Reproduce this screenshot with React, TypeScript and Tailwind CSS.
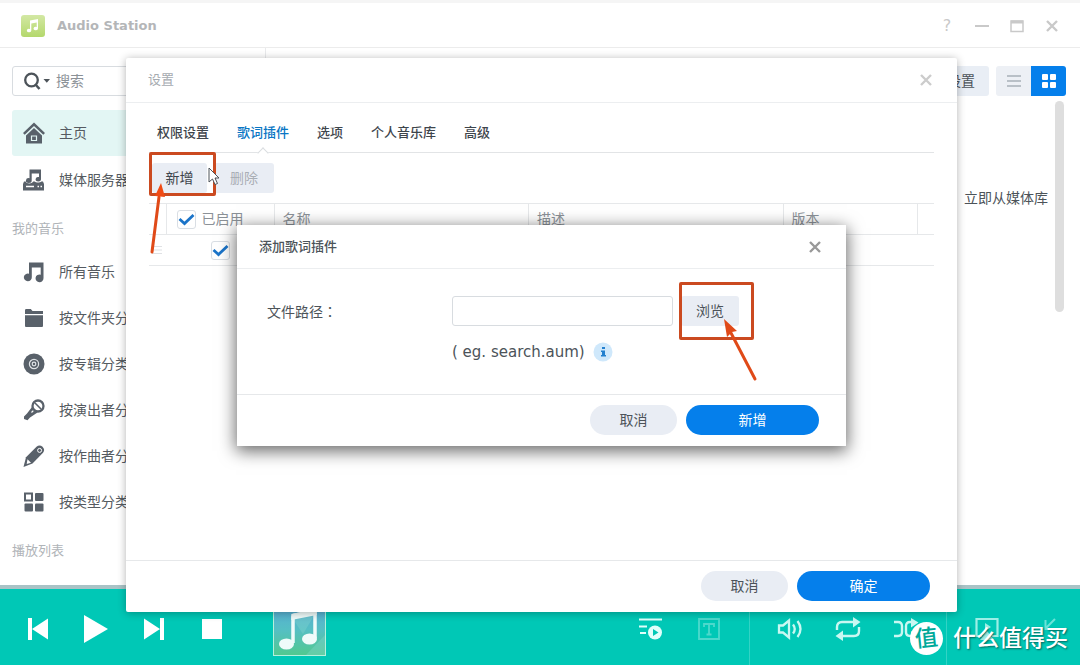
import React from "react";

const sans = "font-['DejaVu_Sans','Noto_Sans_CJK_SC',sans-serif]";

const browseItems = [
  { label: "所有音乐", icon: <NoteIcon /> },
  { label: "按文件夹分类", icon: <FolderIcon /> },
  { label: "按专辑分类", icon: <DiscIcon /> },
  { label: "按演出者分类", icon: <MicIcon /> },
  { label: "按作曲者分类", icon: <PenIcon /> },
  { label: "按类型分类", icon: <GenreIcon /> },
];

const tabs = ["权限设置", "歌词插件", "选项", "个人音乐库", "高级"];

function HomeIcon() {
  return (
    <svg viewBox="0 0 22 22" className="size-[22px]" fill="#59616a">
      <path d="M11 0.5 0 11l1.7 1.8L11 4l9.300 8.800L22 11z" />
      <path d="M3 13.500 11 6l8 7.500V21.500H3z" />
      <path d="M8.500 14h5v4.500h-5z" fill="none" stroke="#e3f6f4" strokeWidth="1.2" />
    </svg>
  );
}

function ServerIcon() {
  return (
    <svg viewBox="0 0 22 22" className="size-[22px]" fill="#59616a">
      <path d="M6.500 0.500H18v9.600a2.700 2.200 0 1 1-2-2V4.500H8.700v6.900a2.900 2.400 0 1 1-2.200-2.200z" />
      <path d="M1 12.500h1.600c.6 2.400 6.400 2.800 7.600 0h1.600c1 1.300 5 1.500 6.500 0H20l1 2.500v6.500H0V15z" />
      <path d="M3 17.500h8M14.500 17.500H16M17.500 17.500H19" stroke="#fff" strokeWidth="1.6" />
    </svg>
  );
}

function NoteIcon() {
  return (
    <svg viewBox="0 0 22 22" className="size-[22px]" fill="#59616a">
      <path d="M6 1.500H20.500V17a4 3.800 0 1 1-2.800-3.300V6.500H8.800v9.500a4 3.800 0 1 1-2.800-3.200z" />
    </svg>
  );
}

function FolderIcon() {
  return (
    <svg viewBox="0 0 22 22" className="size-[22px]" fill="#59616a">
      <path d="M2 3.2Q2 2 3.2 2h4.6L9.500 4H20v3H2zM2 8.300h18V19q0 1-1 1H3q-1 0-1-1z" />
    </svg>
  );
}

function DiscIcon() {
  return (
    <svg viewBox="0 0 22 22" className="size-[22px]" fill="none">
      <circle cx="11" cy="11" r="10.500" fill="#59616a" />
      <circle cx="11" cy="11" r="4.600" stroke="#dfe3e6" strokeWidth="1.200" />
      <circle cx="11" cy="11" r="1.800" stroke="#dfe3e6" strokeWidth="1.200" />
    </svg>
  );
}

function MicIcon() {
  return (
    <svg viewBox="0 0 22 22" className="size-[22px]" fill="none">
      <circle cx="15" cy="7" r="5.500" stroke="#59616a" strokeWidth="2.300" />
      <path d="m12 4 6 6" stroke="#59616a" strokeWidth="1.600" />
      <path d="m9 8 5.500 5.500L7 18.500l-2.500 2.800-3.500-1.300 0-2.500 3-3z" fill="#59616a" />
      <path d="m8.500 13.500 1.800-1.800" stroke="#fff" strokeWidth="1.200" />
    </svg>
  );
}

function PenIcon() {
  return (
    <svg viewBox="0 0 22 22" className="size-[22px]" fill="none">
      <path d="m3 12.300 10.500-10.500q3-2.400 6 0 3 3 .5 6L9.500 18.500 0.500 22z" fill="#59616a" />
      <path d="m4.500 14.300 3.500 3.400-4.300 1.400z" fill="#fff" />
      <circle cx="16.600" cy="5.400" r="2" stroke="#fff" strokeWidth="1" />
    </svg>
  );
}

function GenreIcon() {
  return (
    <svg viewBox="0 0 22 22" className="size-[22px]" fill="#59616a">
      <rect x="2" y="2.500" width="7" height="7" fill="none" stroke="#59616a" strokeWidth="2" />
      <rect x="12" y="2" width="8.500" height="8" rx="1" />
      <rect x="1.500" y="12.500" width="8.500" height="8" rx="1" />
      <rect x="12" y="12.500" width="8.500" height="8" rx="1" />
    </svg>
  );
}

function CloseIcon() {
  return (
    <svg viewBox="0 0 12 12" className="size-3" stroke="currentColor" strokeWidth="2.400">
      <path d="m1 1 10 10M11 1 1 11" />
    </svg>
  );
}

function Checkbox({ label }: { label: string }) {
  return (
    <span className="relative block size-[19px] shrink-0">
      <input
        type="checkbox"
        defaultChecked
        aria-label={label}
        className="block size-full appearance-none rounded-[3px] border border-[#d9dee4] bg-white"
      />
      <svg viewBox="0 0 19 19" className="pointer-events-none absolute inset-0" fill="none">
        <path d="m2.500 9 5 4.500L16.500 5" stroke="#1b74c9" strokeWidth="2.800" />
      </svg>
    </span>
  );
}

function Sidebar() {
  return (
    <aside className="w-[266px] shrink-0 border-r border-[#e9eaec] px-3 pt-[18px] text-[#555b61]">
      <label className="mb-3.5 flex h-[30px] items-center rounded-[3px] border border-[#d8dce0] pl-[11px]">
        <svg viewBox="0 0 26 18" className="h-[18px] w-[26px] shrink-0" fill="none">
          <circle cx="7.500" cy="8" r="6.300" stroke="#4c5359" strokeWidth="2.300" />
          <path d="m11.500 12.500 4 4.500" stroke="#4c5359" strokeWidth="2.600" />
          <path d="M19.500 7h6.500l-3.200 3.800z" fill="#4c5359" />
        </svg>
        <input
          placeholder="搜索"
          className="ml-1.5 w-full min-w-0 bg-transparent text-sm outline-none placeholder:text-[#8b9197]"
        />
      </label>
      <nav className="text-sm">
        <div className="flex flex-col gap-px">
          <a href="#home" className="flex h-[46px] items-center gap-3.5 rounded-[3px] bg-[#e3f6f4] pl-[11px]">
            <HomeIcon />
            主页
          </a>
          <a href="#server" className="flex h-[46px] items-center gap-3.5 pl-[11px]">
            <ServerIcon />
            媒体服务器
          </a>
        </div>
        <h2 className="pt-4 pb-2.5 text-[13px] leading-5 text-[#b0b4b8]">我的音乐</h2>
        {browseItems.map((item) => (
          <a key={item.label} href="#browse" className="flex h-[46px] items-center gap-3.5 pl-[11px]">
            {item.icon}
            {item.label}
          </a>
        ))}
        <h2 className="pt-4 text-[13px] leading-5 text-[#b0b4b8]">播放列表</h2>
      </nav>
    </aside>
  );
}

function Library() {
  return (
    <main className="min-w-0 flex-1 pt-[18px] pr-3.5 text-[#4c5359]">
      <div className="flex h-[30px] justify-end text-sm">
        <button className="rounded-[3px] bg-[#e9eef5] px-3.5">设置</button>
        <button aria-label="列表" className="ml-[7px] flex w-[35px] items-center justify-center rounded-l-[3px] bg-[#edf0f5]">
          <svg viewBox="0 0 14 12" className="h-3 w-3.5" stroke="#a8b0b8" strokeWidth="1.500">
            <path d="M0 1h14M0 6h14M0 11h14" />
          </svg>
        </button>
        <button aria-label="图标" className="flex w-[35px] items-center justify-center rounded-r-[3px] bg-[#057feb]">
          <svg viewBox="0 0 14 14" className="size-3.5" fill="#fff">
            <rect width="6" height="6" rx="1" />
            <rect x="8" width="6" height="6" rx="1" />
            <rect y="8" width="6" height="6" rx="1" />
            <rect x="8" y="8" width="6" height="6" rx="1" />
          </svg>
        </button>
      </div>
      <div className="flex justify-end gap-[7px] pt-[5px]">
        <p className="pt-[87px] text-sm leading-5">立即从媒体库</p>
        <div className="mr-0.5 h-[211px] w-[9px] rounded-full bg-[#dedede]" />
      </div>
    </main>
  );
}

function PlayerButton({ label, children }: { label: string; children: React.ReactNode }) {
  return (
    <button aria-label={label} className="flex h-10 w-[58px] items-center justify-center">
      {children}
    </button>
  );
}

function Player() {
  return (
    <footer className="flex h-20 items-center border-t-4 border-[#a9c3c6] bg-[#00c8b6] pt-1 pr-px pl-[9px] text-white">
      <PlayerButton label="上一首">
        <svg viewBox="0 0 22 24" className="h-6 w-[22px]" fill="currentColor">
          <path d="M1 1h4v22H1zM21 1.500v21L5 12z" />
        </svg>
      </PlayerButton>
      <PlayerButton label="播放">
        <svg viewBox="0 0 24 28" className="h-7 w-6" fill="currentColor">
          <path d="M0 0 24 14 0 28z" />
        </svg>
      </PlayerButton>
      <PlayerButton label="下一首">
        <svg viewBox="0 0 22 24" className="h-6 w-[22px]" fill="currentColor">
          <path d="M17 1h4v22h-4zM1 1.500v21L17 12z" />
        </svg>
      </PlayerButton>
      <PlayerButton label="停止">
        <svg viewBox="0 0 20 20" className="size-5" fill="currentColor">
          <path d="M0 0h20v20H0z" />
        </svg>
      </PlayerButton>
      <svg viewBox="0 0 53 53" className="ml-8 size-[53px]">
        <defs>
          <linearGradient id="cover" x1="0" y1="0" x2="0" y2="1">
            <stop offset="0" stopColor="#58a9d6" />
            <stop offset="0.500" stopColor="#55bfc4" />
            <stop offset="1" stopColor="#52c98f" />
          </linearGradient>
        </defs>
        <rect x="0.500" y="0.500" width="52" height="52" fill="url(#cover)" stroke="#b5f0dc" />
        <path d="m20 16 22-5-12 20zM33 52l19-20v20z" fill="#86d8cf" opacity="0.350" />
        <path d="M20 12.500 42 8v27M20 12.500V40" fill="none" stroke="#effbfa" strokeWidth="3.500" />
        <path d="M18.300 11 43.700 6v6l-25.400 5z" fill="#effbfa" />
        <ellipse cx="13.500" cy="41" rx="7.500" ry="5.500" fill="#effbfa" />
        <ellipse cx="36.500" cy="36" rx="7.500" ry="5.500" fill="#effbfa" />
      </svg>

      <div className="ml-auto flex items-center">
        <PlayerButton label="播放队列">
          <svg viewBox="0 0 24 22" className="h-[22px] w-6" fill="none" stroke="#e0fffb" strokeWidth="2.200">
            <path d="M0 1.500h23M0 8.500h8M1 15h6" />
            <circle cx="16" cy="14.500" r="7" fill="#e0fffb" stroke="none" />
            <path d="m14 11 5.500 3.500L14 18z" fill="#00c8b6" stroke="none" />
          </svg>
        </PlayerButton>
        <PlayerButton label="歌词">
          <svg viewBox="0 0 22 22" className="size-[22px] opacity-30" fill="none" stroke="#fff" strokeWidth="1.800">
            <path d="M1 1h20v20H1zM6 9V6h10v3M11 6v11M8.500 16.500h5" />
          </svg>
        </PlayerButton>
        <div className="mx-[11px] h-[72px] w-px bg-[#33d3c5]" />
        <PlayerButton label="音量">
          <svg viewBox="0 0 26 22" className="h-[22px] w-[26px]" fill="none" stroke="#c9f8f2" strokeWidth="2.300">
            <path d="M2 7.500h4l6-5v17l-6-5H2zM16 6.500q3.500 4.500 0 9M20.500 3q6 8 0 16" />
          </svg>
        </PlayerButton>
        <PlayerButton label="循环">
          <svg viewBox="0 0 26 24" className="h-6 w-[26px]" fill="none" stroke="#c9f8f2" strokeWidth="2.400">
            <path d="M2 13V10q0-5 5-5h12M24 10v4q0 5-5 5H7" />
            <path d="m18 0 7.500 5-7.500 5.500zM8 13.500.5 19 8 24z" fill="#c9f8f2" stroke="none" />
          </svg>
        </PlayerButton>
        <PlayerButton label="随机">
          <svg viewBox="0 0 26 22" className="h-[22px] w-[26px]" fill="none" stroke="#c9f8f2" strokeWidth="2.400">
            <path d="M1 4h4q4 0 4 4v6q0 4-4 4H1M20 4h-3q-4 0-4 4v6q0 4 4 4h3" />
            <path d="m18 0 7.500 4.500-7.500 5zM18 13l7 5-7 4z" fill="#c9f8f2" stroke="none" />
          </svg>
        </PlayerButton>
        <div className="mx-[11px] h-[72px] w-px bg-[#33d3c5]" />
        <PlayerButton label="播放设备">
          <svg viewBox="0 0 24 24" className="size-6" fill="none" stroke="#9cefe6" strokeWidth="2.200">
            <path d="M7 19H1.500V2h21v17H17" />
            <path d="m12 14-7 9h14z" fill="#9cefe6" stroke="none" />
            <path d="M10 6v8l6-4z" fill="#9cefe6" stroke="none" />
          </svg>
        </PlayerButton>
        <div className="w-[5px]" />
        <PlayerButton label="迷你播放器">
          <svg viewBox="0 0 12 24" className="h-6 w-3" fill="none" stroke="#6be3d8" strokeWidth="2">
            <path d="M11 2 2 11M1.500 3v9H10" />
          </svg>
        </PlayerButton>
      </div>
    </footer>
  );
}

function DialogActions({ confirm }: { confirm: string }) {
  return (
    <div className="flex justify-end gap-[9px] border-t border-[#e6e8ea] pt-2.5 pb-[11px] pr-[27px] text-sm">
      <button className="h-[30px] w-[87px] rounded-full bg-[#e9edf4] text-[#4c5359]">取消</button>
      <button className="h-[30px] w-[133px] rounded-full bg-[#057feb] text-white">{confirm}</button>
    </div>
  );
}

function AddPluginDialog() {
  return (
    <section
      role="dialog"
      aria-label="添加歌词插件"
      className="w-[609px] bg-white text-[#4c5359] shadow-[0_4px_16px_1px_rgba(0,0,0,0.6)]"
    >
      <header className="flex h-11 items-center justify-between border-b border-[#eceef0] pr-[25px] pl-[22px]">
        <h2 className="text-[13px] font-medium">添加歌词插件</h2>
        <button aria-label="关闭" className="text-[#999]">
          <CloseIcon />
        </button>
      </header>
      <div className="h-[125px] pt-[27px] pl-[30px] text-sm">
        <div className="flex items-center">
          <label htmlFor="path" className="w-[185px]">
            文件路径<span className="font-['Noto_Sans_CJK_TC',sans-serif]">：</span>
          </label>
          <input id="path" className="h-[30px] w-[221px] rounded-[3px] border border-[#d8dce0] px-2 outline-none" />
          <div className="relative ml-2">
            <button className="h-[30px] w-[58px] rounded-[3px] bg-[#e9edf4]">浏览</button>
            <div className="pointer-events-none absolute -top-3.5 -left-0.5 h-[58px] w-[75px] rounded-[2px] border-3 border-[#cb4a20]" />
            <svg
              viewBox="0 0 36 66"
              className="pointer-events-none absolute top-[23px] left-[42px] h-[66px] w-9"
              fill="#e04a18"
            >
              <path d="m8 14 24 46" stroke="#e04a18" strokeWidth="3" strokeLinecap="round" />
              <path d="m1 0 13 12-5 1-5 5z" />
            </svg>
          </div>
        </div>
        <p className="mt-4 flex items-center gap-2 pl-[185px] text-[15px] leading-5">
          ( eg. search.aum)
          <svg viewBox="0 0 20 20" className="size-5">
            <circle cx="10" cy="10" r="9.500" fill="#cfe8fb" />
            <path d="M9 5h3v2H9zM8 8.500h4V13h1v1.500H8V13h1v-3H8z" fill="#2280cf" />
          </svg>
        </p>
      </div>
      <DialogActions confirm="新增" />
    </section>
  );
}

function SettingsDialog() {
  return (
    <section
      role="dialog"
      aria-label="设置"
      className="relative flex min-h-[554px] w-full flex-col rounded-[2px] bg-white text-[#3e454c] shadow-[0_1px_9px_rgba(0,0,0,0.3)]"
    >
      <header className="flex h-[45px] items-center justify-between border-b border-[#eceef0] pr-[25px] pl-[22px] text-[#a5aab0]">
        <h2 className="text-[13px]">设置</h2>
        <button aria-label="关闭" className="text-[#ccc]">
          <CloseIcon />
        </button>
      </header>
      <div className="flex-1 px-[23px]">
        <nav className="flex gap-7 border-b border-[#e2e4e6] px-2 pt-5 text-[13px] leading-5 font-medium">
          {tabs.map((tab) =>
            tab === "歌词插件" ? (
              <button key={tab} className="relative pb-[9px] text-[#0a76c4]">
                {tab}
                <span className="absolute -bottom-[5px] left-[22px] size-2 rotate-45 border-t border-l border-[#dadde0] bg-white" />
              </button>
            ) : (
              <button key={tab} className="pb-[9px]">
                {tab}
              </button>
            )
          )}
        </nav>

        <div className="flex gap-[7px] py-2.5 pl-[3px] text-sm">
          <div className="relative">
            <button className="h-[30px] w-[55px] rounded-[3px] bg-[#e9edf4]">新增</button>
            {/* callout box, arrow and mouse pointer */}
            <div className="pointer-events-none absolute -top-[11px] -left-[3px] z-10 h-11 w-[67px] rounded-[2px] border-3 border-[#cb4a20]" />
            <svg
              viewBox="0 0 16 72"
              className="pointer-events-none absolute top-5 -left-0.5 z-10 h-[72px] w-4"
              fill="#f04a14"
            >
              <path d="M9 14 2 69" stroke="#e04a18" strokeWidth="3" strokeLinecap="round" />
              <path d="m11 0 4 14-10-1z" />
            </svg>
            <svg
              viewBox="0 0 12 19"
              className="pointer-events-none absolute top-1 left-[56px] z-10 h-[19px] w-3"
              fill="#fff"
              stroke="#4c5359"
            >
              <path d="M1 1v14l3.500-3 2.500 5.500 2.500-1L7 11h4z" />
            </svg>
          </div>
          <button className="h-[30px] w-[60px] rounded-[3px] bg-[#e9edf4] text-[#a9aeb5]">删除</button>
        </div>

        <table className="w-full table-fixed border-y border-[#e6e8ea] text-left text-sm">
          <thead>
            <tr className="h-[31px] border-b border-[#e6e8ea] text-[#8b9197]">
              <th className="w-[17px] border-r border-[#e6e8ea]" />
              <th className="w-[108px] border-r border-[#e6e8ea] pl-2.5 font-normal">
                <span className="flex items-center gap-1.5">
                  <Checkbox label="全部启用" />
                  已启用
                </span>
              </th>
              <th className="border-r border-[#e6e8ea] pl-2 font-normal">名称</th>
              <th className="border-r border-[#e6e8ea] pl-2 font-normal">描述</th>
              <th className="w-[134px] border-r border-[#e6e8ea] pl-2 font-normal">版本</th>
              <th className="w-[17px]" />
            </tr>
          </thead>
          <tbody>
            <tr className="h-[31px]">
              <td>
                <svg viewBox="0 0 10 8" className="ml-[3px] h-2 w-2.5" stroke="#dfe1e4">
                  <path d="M0 .5h10M0 4h10M0 7.500h10" />
                </svg>
              </td>
              <td className="pl-[45px]">
                <Checkbox label="启用插件" />
              </td>
              <td />
              <td />
              <td />
              <td />
            </tr>
          </tbody>
        </table>
      </div>
      <DialogActions confirm="确定" />
      <div className="absolute inset-x-0 top-[167px] flex justify-center">
        <AddPluginDialog />
      </div>
    </section>
  );
}

export default function App() {
  return (
    <div className={`relative flex min-h-screen flex-col overflow-hidden bg-white ${sans}`}>
      {/* Title bar */}
      <header className="flex h-12 items-center border-t-3 border-b border-t-[#f5f5f5] border-b-[#ececec] px-[21px] pt-px text-[#c9c9c9]">
        <svg viewBox="0 0 24 22" className="h-[22px] w-6">
          <defs>
            <linearGradient id="logo" x1="0" y1="0" x2="0" y2="1">
              <stop offset="0" stopColor="#d3e8a4" />
              <stop offset="1" stopColor="#b4d86c" />
            </linearGradient>
          </defs>
          <rect width="24" height="22" rx="3" fill="url(#logo)" />
          <path
            d="M9 5.500 17 4v9.500a2.200 1.700 0 1 1-1.300-1.500V7.500L10.300 8.500v7a2.200 1.700 0 1 1-1.300-1.500z"
            fill="#fff"
          />
        </svg>
        <h1 className="ml-3 flex-1 text-[13px] font-bold text-[#b4b6b8]">Audio Station</h1>
        <div className="flex items-center gap-[21px]">
          <button aria-label="帮助" className="w-3.5 text-base leading-5">
            ?
          </button>
          <button aria-label="最小化">
            <svg viewBox="0 0 14 14" className="size-3.5" stroke="currentColor" strokeWidth="2">
              <path d="M0 7h14" />
            </svg>
          </button>
          <button aria-label="最大化">
            <svg viewBox="0 0 14 14" className="size-3.5" fill="none" stroke="currentColor" strokeWidth="1.500">
              <path d="M1 2h12v10.500H1z" />
              <path d="M1 3h12" strokeWidth="3" />
            </svg>
          </button>
          <button aria-label="关闭窗口" className="px-px">
            <CloseIcon />
          </button>
        </div>
      </header>

      <div className="flex flex-1">
        <Sidebar />
        <Library />
      </div>
      <Player />

      <div className="absolute inset-0 pt-[58px] pr-[123px] pl-[126px]">
        <SettingsDialog />
      </div>

      {/* Watermark */}
      <div className="pointer-events-none absolute right-3 bottom-2.5 flex items-center gap-2.5 text-white">
        <span className="flex size-[33px] items-center justify-center rounded-full bg-white">
          <span className="-rotate-6 text-[23px] leading-none font-medium text-[#00a99a]">值</span>
        </span>
        <span className="text-[23px] leading-[33px] font-medium text-shadow-[1px_1px_2px_rgba(0,0,0,0.5)]">
          什么值得买
        </span>
      </div>
    </div>
  );
}
